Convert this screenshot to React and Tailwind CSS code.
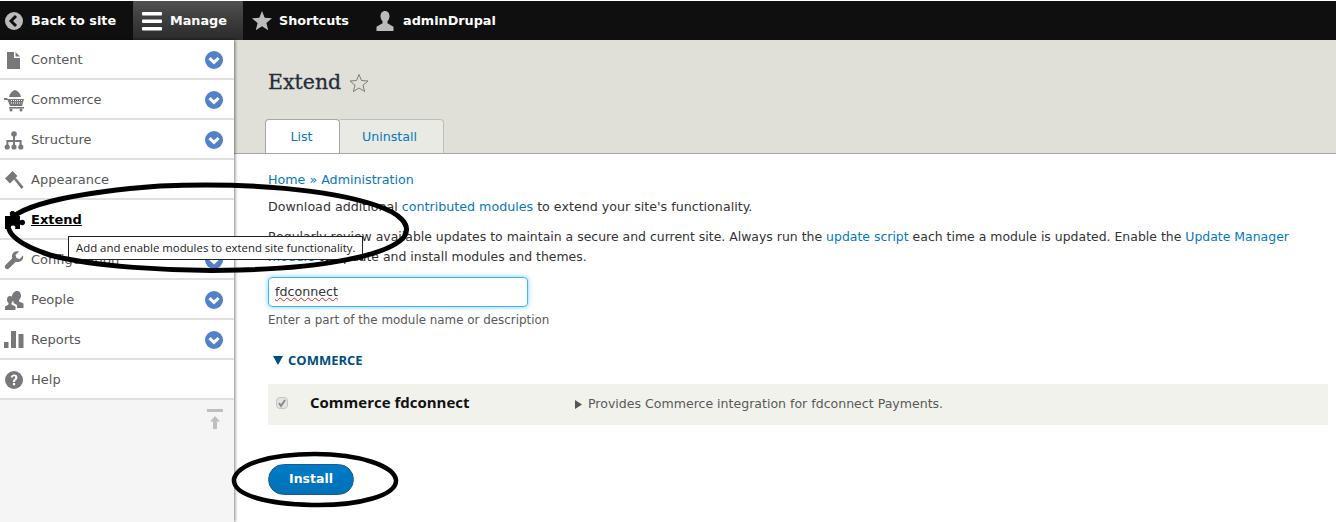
import React from 'react'

const FONT = "font-['DejaVu_Sans',Verdana,sans-serif]"

const ChevronBadge = () => (
  <svg width="18" height="18" viewBox="0 0 18 18" className="shrink-0">
    <circle cx="9" cy="9" r="9" fill="#5181c9" />
    <path d="M4.5 7.2 9 11.4l4.5-4.2" fill="none" stroke="#fff" strokeWidth="3" strokeLinejoin="miter" />
  </svg>
)

const icons = {
  content: <path d="M3 2h7v6h6v11H3zM11.500 2 16 6.500h-4.500z" />,
  commerce: (
    <>
      <path d="M5 7C5.500 3.500 8 1 11 0c3 1 5.500 3.500 6 7z" />
      <path d="M0 8h3l.800 1h16.200l-2 7H6L3.500 10H0z" />
      <path d="M7 10.500h11M7 13h10.500" stroke="#fff" strokeWidth="1" strokeDasharray="1 1" />
      <rect x="5" y="17" width="15" height="1.600" />
      <circle cx="7" cy="20" r="1.500" />
      <circle cx="17" cy="20" r="1.500" />
    </>
  ),
  structure: (
    <>
      <circle cx="10" cy="4" r="2.800" />
      <rect x="9" y="6" width="2" height="10" />
      <rect x="3" y="10" width="14" height="2" />
      <rect x="2.400" y="10" width="2" height="6" />
      <rect x="15.600" y="10" width="2" height="6" />
      <circle cx="3.200" cy="17" r="2.600" />
      <circle cx="10" cy="17" r="2.600" />
      <circle cx="16.800" cy="17" r="2.600" />
    </>
  ),
  appearance: (
    <>
      <path d="M1 8.500 8.500 1l5 5L6 13.500z" />
      <path d="M10 9.500l1.800-1.800 7.700 9.300-2 2z" />
    </>
  ),
  extend: (
    <path d="M1 6h5.500C5 3.500 6 1 8.500 1S12 3.500 10.500 6H16v4.500c2.500-1.500 5-.500 5 2s-2.500 3.500-5 2V19h-5c1-2 0-3.500-2-3.500S6 17 7 19H1z" />
  ),
  configuration: (
    <path d="M19 5.500 15.500 9l-3-1-1-3L15 1.500C12 .500 8.500 2 8 5.500c-.200 1 0 2 .300 2.700L1.500 15c-1 1-1 2.500 0 3.500s2.500 1 3.500 0l6.800-6.800c.800.300 1.700.500 2.700.300 3.500-.500 5.500-3.500 4.500-6.500z" />
  ),
  people: (
    <>
      <path d="M13 1c2.500 0 4 2 4 4.500 0 2-1 3.500-2 4.500v1.500l4.500 2V18h-6.500v-3l-3.500-2v-1.500c-1-1-1.500-3-1.500-5C8 3.500 10.500 1 13 1z" />
      <path d="M6 6c2 0 3 1.500 3 3.500 0 1.500-.500 2.500-1.500 3.500v1.500l4 2V20H1v-3.500L4.500 14.500V13C3.500 12 3 11 3 9.500 3 7.500 4 6 6 6z" />
    </>
  ),
  reports: (
    <>
      <rect x="0" y="12" width="4.500" height="6" />
      <rect x="7" y="1" width="5" height="17" />
      <rect x="14.500" y="4" width="5" height="14" />
    </>
  ),
  help: (
    <>
      <circle cx="10" cy="10" r="9" />
      <path d="M6.800 7.500C7 5.500 8.300 4.500 10.200 4.500c2 0 3.300 1.200 3.300 2.900 0 2.400-2.500 2.500-2.500 4.600H8.900c0-3 2.400-3 2.400-4.500 0-.700-.500-1.200-1.200-1.200-.800 0-1.200.500-1.300 1.300z" fill="#fff" />
      <rect x="8.900" y="13" width="2.200" height="2.300" fill="#fff" />
    </>
  ),
}

const MENU = [
  { key: 'content', label: 'Content', more: true },
  { key: 'commerce', label: 'Commerce', more: true },
  { key: 'structure', label: 'Structure', more: true },
  { key: 'appearance', label: 'Appearance' },
  { key: 'extend', label: 'Extend', active: true },
  { key: 'configuration', label: 'Configuration', more: true },
  { key: 'people', label: 'People', more: true },
  { key: 'reports', label: 'Reports', more: true },
  { key: 'help', label: 'Help' },
]

const MenuItem = ({ item }) => (
  <div className="flex h-10 items-center border-b-2 border-[#e0e0e0] bg-white pl-1 pr-[11px] pt-0.5">
    <svg width="20" height="21" viewBox="0 0 20 21" fill={item.active ? '#000' : '#787878'} className="shrink-0 overflow-visible">
      {icons[item.key]}
    </svg>
    <span className={item.active ? 'ml-[7px] flex-1 text-[13px] font-bold text-black underline' : 'ml-[7px] flex-1 text-[13px] text-[#565656]'}>
      {item.label}
    </span>
    {item.more && <ChevronBadge />}
  </div>
)

const ToolbarItem = ({ icon, label, className = '' }) => (
  <div className={`flex h-full items-center text-[12.8px] font-bold text-white ${className}`}>
    {icon}
    <span>{label}</span>
  </div>
)

const Toolbar = () => (
  <div className="flex h-[39px] bg-[#0f0f0f]">
    <ToolbarItem
      className="w-[133px] gap-2 pl-[5px]"
      label="Back to site"
      icon={
        <svg width="18" height="18" viewBox="0 0 18 18" className="shrink-0">
          <circle cx="9" cy="9" r="9" fill="#bbb" />
          <path d="M11 4 6 9l5 5" fill="none" stroke="#0f0f0f" strokeWidth="3" />
        </svg>
      }
    />
    <ToolbarItem
      className="w-[110px] gap-2 bg-gradient-to-b from-[#505050] to-[#2a2a2a] pl-[9px]"
      label="Manage"
      icon={
        <svg width="20" height="20" viewBox="0 0 20 20" fill="#fff" className="shrink-0">
          <rect y="1" width="20" height="3.500" rx="1" />
          <rect y="8.500" width="20" height="3.500" rx="1" />
          <rect y="16" width="20" height="3.500" rx="1" />
        </svg>
      }
    />
    <ToolbarItem
      className="w-[120px] gap-[7px] pl-[9px]"
      label="Shortcuts"
      icon={
        <svg width="20" height="20" viewBox="0 0 20 20" fill="#bbb" className="shrink-0">
          <path d="M10 0l2.700 6.800 7.300.500-5.600 4.700 1.800 7.200L10 15.200l-6.200 4 1.800-7.200L0 7.300l7.300-.500z" />
        </svg>
      }
    />
    <ToolbarItem
      className="gap-2 pl-3"
      label="adminDrupal"
      icon={
        <svg width="20" height="20" viewBox="0 0 20 20" fill="#bbb" className="shrink-0">
          <path d="M10 0c3 0 4.500 2.300 4.500 5.300 0 2.200-1 4-2 5v2l6 3.500V20H1.500v-4.200l6-3.500v-2c-1-1-2-2.800-2-5C5.500 2.300 7 0 10 0z" />
        </svg>
      }
    />
  </div>
)

const Sidebar = () => (
  <aside className="relative z-10 flex w-[234px] shrink-0 flex-col bg-[#f5f5f5] shadow-[1px_0_3px_rgba(0,0,0,0.5)]">
    {MENU.map((item) => (
      <MenuItem key={item.key} item={item} />
    ))}
    <div className="flex justify-end pr-[11px] pt-[9px]">
      <svg width="16" height="22" viewBox="0 0 16 22" fill="#bfbfbf">
        <rect width="16" height="3" />
        <path d="M8 7l5 5.500h-3V20H6v-7.500H3z" />
      </svg>
    </div>
  </aside>
)

const A = ({ children }) => <span className="text-[#0678be]">{children}</span>

const Main = () => (
  <main className="min-w-0 flex-1 text-[12.66px] text-[#333]">
    <div className="h-[114px] border-b border-[#a6a6a6] bg-[#e0e0d8] pl-[34px]">
      <h1 className="flex items-center gap-2 pt-[29px] font-['DejaVu_Serif',Georgia,serif] text-[20.5px] leading-[27px] text-[#262c3a] [-webkit-text-stroke:0.3px_#262c3a]">
        Extend
        <svg width="20" height="20" viewBox="0 0 20 20" fill="none" stroke="#7d7d74">
          <path d="M10 1.500l2.500 6 6.500.500-5 4.200 1.600 6.300L10 15l-5.600 3.500L6 12.200 1 8l6.500-.500z" />
        </svg>
      </h1>
      <div className="ml-[-3px] mt-[23px] flex h-[34px] items-stretch">
        <div className="relative flex w-[75px] items-center justify-center rounded-t border border-b-0 border-[#a6a6a6] bg-white pr-0.5 pt-0.5 text-[#0678be]">
          List
        </div>
        <div className="flex w-[104px] items-center justify-center rounded-tr border border-b-0 border-l-0 border-[#bfbfba] bg-[#eaeae4] pr-1 pt-0.5 text-[#0678be]">
          Uninstall
        </div>
      </div>
    </div>
    <div className="pl-[34px] pr-2">
      <div className="pt-4 leading-5 text-[#0678be]">
        Home <span className="text-[#0678be]">»</span> Administration
      </div>
      <p className="mt-[7px] leading-5">
        Download additional <A>contributed modules</A> to extend your site's functionality.
      </p>
      <p className="mt-[10px] text-[12.46px] leading-5">
        Regularly review available updates to maintain a secure and current site. Always run the <A>update script</A> each time a module is updated. Enable the <A>Update Manager module</A> to update and install modules and themes.
      </p>
      <div className="mt-[10px] flex h-[30px] w-[260px] items-center rounded-sm border border-[#40b6ff] px-[6px] shadow-[0_0_5px_rgba(64,182,255,0.7)]">
        <span className="underline decoration-[#e02020] decoration-wavy decoration-1">fdconnect</span>
      </div>
      <div className="mt-[3px] text-[11.9px] leading-5 text-[#595959]">Enter a part of the module name or description</div>
      <div className="mt-5 flex items-center gap-[5px] pl-[5px] font-['Open_Sans',sans-serif] text-[13px] font-bold leading-5 text-[#004f80]">
        <svg width="10" height="9" viewBox="0 0 10 9" fill="#004f80">
          <path d="M0 0h10L5 9z" />
        </svg>
        COMMERCE
      </div>
      <div className="mt-[14px] flex h-[41px] items-center bg-[#f2f2ec]">
        <div className="mb-1 ml-2 flex h-3 w-3 items-center justify-center rounded-sm border border-[#c4c4c4] bg-[#e4e4e4]">
          <svg width="10" height="10" viewBox="0 0 10 10" fill="none" stroke="#8a8a8a" strokeWidth="2">
            <path d="M2 5l2 3 4-6" />
          </svg>
        </div>
        <div className="mb-1 ml-[22px] w-[265px] font-['Open_Sans',sans-serif] text-[15px] font-bold text-[#111]">Commerce fdconnect</div>
        <svg width="7" height="9" viewBox="0 0 7 9" fill="#555" className="shrink-0">
          <path d="M0 0l7 4.500L0 9z" />
        </svg>
        <div className="ml-[6px] text-[12.55px] text-[#595959]">Provides Commerce integration for fdconnect Payments.</div>
      </div>
      <button className="mt-[39px] flex h-[31px] w-[86px] items-center justify-center rounded-[20px] border border-[#1e5c90] bg-gradient-to-b from-[#007bc6] to-[#0071b8] text-[12.5px] font-bold text-white">
        Install
      </button>
    </div>
  </main>
)

export default function App() {
  return (
    <div className={`relative h-[522px] w-[1336px] overflow-hidden bg-white pt-px ${FONT}`}>
      <Toolbar />
      <div className="flex h-[482px]">
        <Sidebar />
        <Main />
      </div>

      {/* tooltip and the hand drawn marks lie over the page */}
      <div className="absolute left-[68px] top-[236px] z-20 flex h-6 w-[295px] items-center whitespace-nowrap border border-[#222] bg-white pl-[7px] font-['Open_Sans',sans-serif] text-[11.4px] text-[#222]">
        Add and enable modules to extend site functionality.
      </div>
      <svg className="pointer-events-none absolute left-0 top-0 z-30" width="1336" height="522" fill="none" stroke="#000">
        <path strokeWidth="5" d="M8 222C20 204 80 192 160 186 250 182 330 190 375 205 400 213 412 225 404 237 388 256 320 268 240 270 170 272 90 266 50 255 25 247 6 236 8 222z" />
        <path strokeWidth="4.500" d="M234 479C238 464 270 454 315 454 360 454 394 466 396 480 397 495 360 506 312 505 270 504 232 496 234 479z" />
      </svg>
    </div>
  )
}
